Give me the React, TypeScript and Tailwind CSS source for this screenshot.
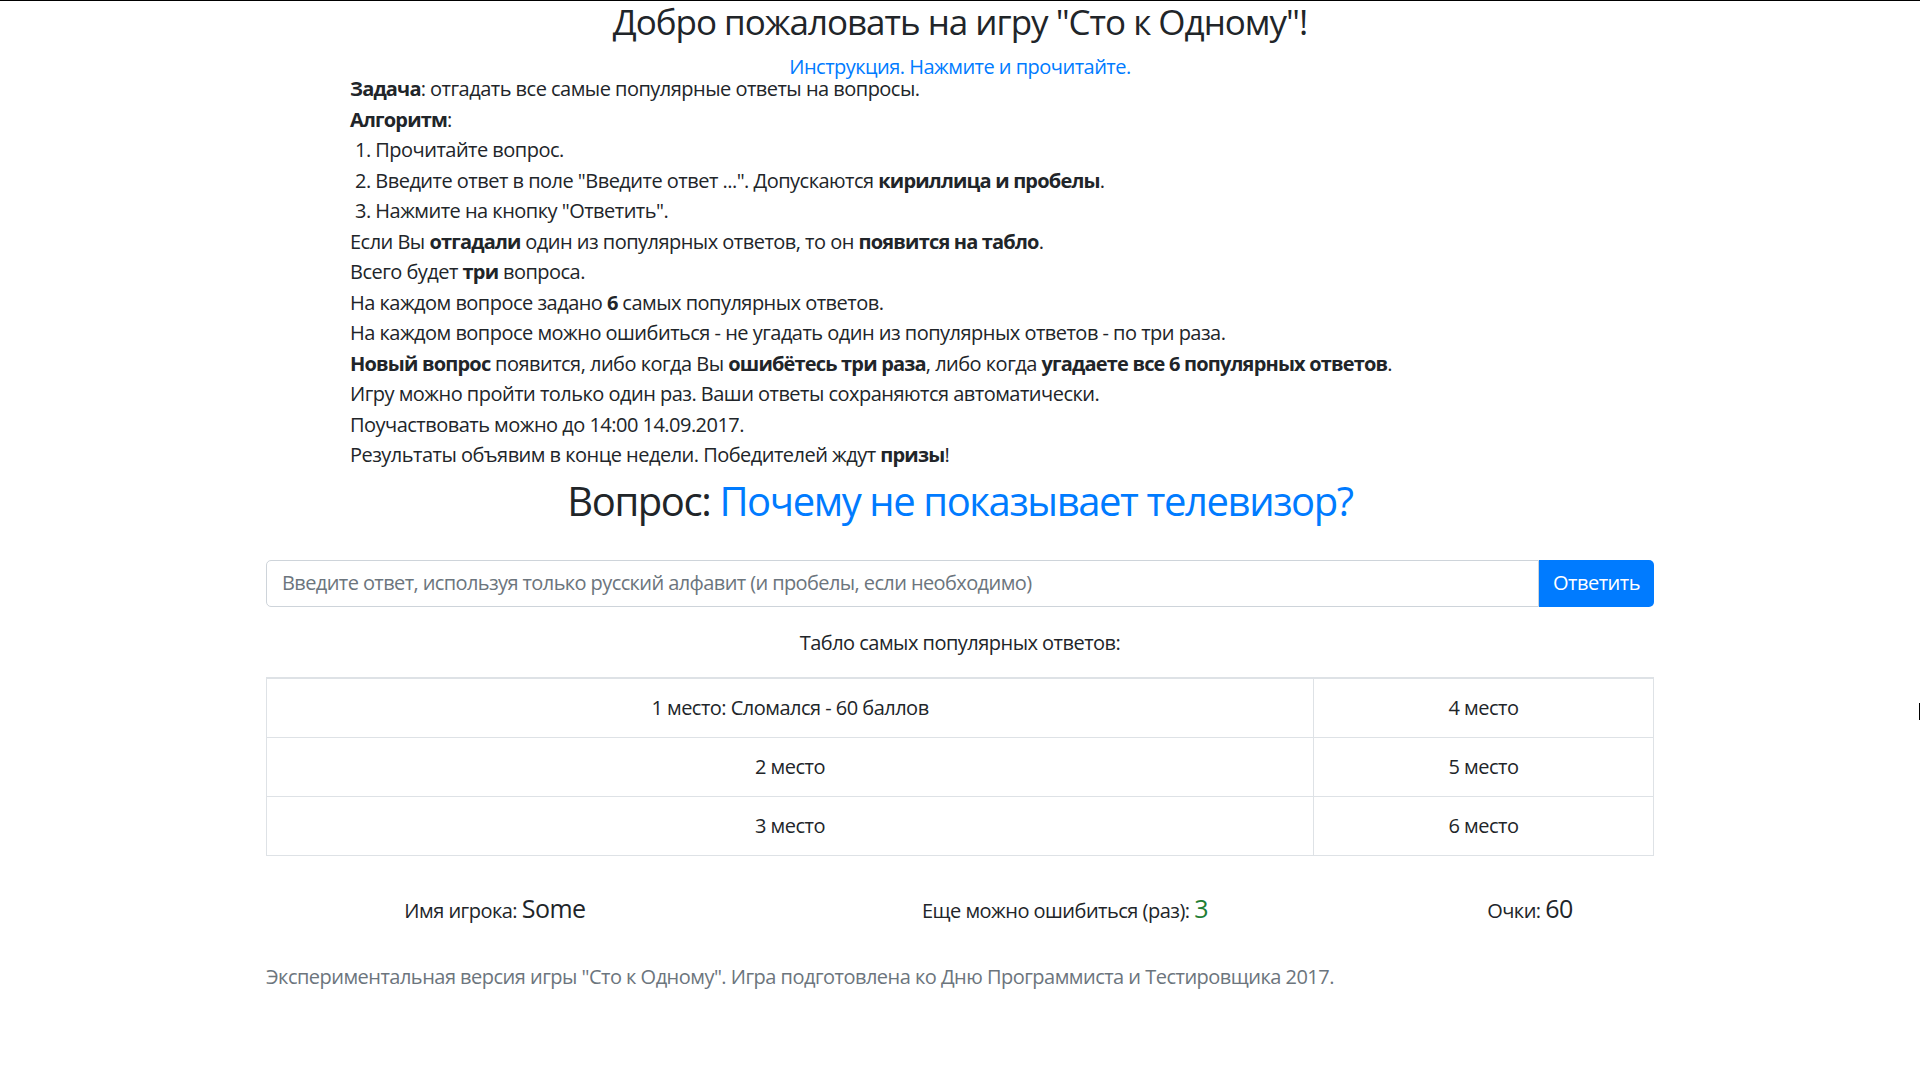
import React from "react";

const font = "font-['Segoe_UI','Open_Sans',sans-serif] tracking-[-0.026em]";

const rules: React.ReactNode[] = [
  <>
    <b>Задача</b>: отгадать все самые популярные ответы на вопросы.
  </>,
  <>
    <b>Алгоритм</b>:
  </>,
  <span className="pl-[5px]">1. Прочитайте вопрос.</span>,
  <span className="pl-[5px]">
    2. Введите ответ в поле "Введите ответ ...". Допускаются <b>кириллица и пробелы</b>.
  </span>,
  <span className="pl-[5px]">3. Нажмите на кнопку "Ответить".</span>,
  <>
    Если Вы <b>отгадали</b> один из популярных ответов, то он <b>появится на табло</b>.
  </>,
  <>
    Всего будет <b>три</b> вопроса.
  </>,
  <>
    На каждом вопросе задано <b>6</b> самых популярных ответов.
  </>,
  <>На каждом вопросе можно ошибиться - не угадать один из популярных ответов - по три раза.</>,
  <>
    <b>Новый вопрос</b> появится, либо когда Вы <b>ошибётесь три раза</b>, либо когда{" "}
    <b>угадаете все 6 популярных ответов</b>.
  </>,
  <>Игру можно пройти только один раз. Ваши ответы сохраняются автоматически.</>,
  <>Поучаствовать можно до 14:00 14.09.2017.</>,
  <>
    Результаты объявим в конце недели. Победителей ждут <b>призы</b>!
  </>,
];

const board = [
  ["1 место: Сломался - 60 баллов", "4 место"],
  ["2 место", "5 место"],
  ["3 место", "6 место"],
];

export default function App() {
  return (
    <div className={`${font} relative min-h-[1080px] bg-white text-[#212529] text-[20px] leading-[30px] border-t-[1px] border-black`}>
      <div className="absolute right-0 top-[702px] h-[17px] w-[1px] bg-black" />

      <div className="mx-auto w-[1388px]">
        <h3 className="text-center text-[35px] leading-[42px] font-normal tracking-[-0.029em]">
          Добро пожаловать на игру "Сто к Одному"!
        </h3>

        <div className="mt-[9px] h-[22px] text-center">
          <a href="#" className="text-[#007bff]">
            Инструкция. Нажмите и прочитайте.
          </a>
        </div>

        <div className="pl-[84px] [&_b]:font-bold [&_b]:tracking-[-0.041em]">
          {rules.map((r, i) => (
            <div key={i} className="leading-[30.5px]">
              {r}
            </div>
          ))}
        </div>

        <h2 className="mt-[6px] text-center text-[40px] leading-[48px] font-normal tracking-[-0.035em]">
          Вопрос: <span className="text-[#007bff]">Почему не показывает телевизор?</span>
        </h2>

        <div className="mt-[35px] flex h-[47px]">
          <input
            className="min-w-0 flex-1 rounded-l-[5px] border border-[#ced4da] px-[15px] text-[20px] tracking-[-0.03em] outline-none placeholder:text-[#6c757d]"
            placeholder="Введите ответ, используя только русский алфавит (и пробелы, если необходимо)"
          />
          <button className="w-[115px] rounded-r-[5px] bg-[#007bff] text-[20px] text-white">
            Ответить
          </button>
        </div>

        <p className="mt-[21px] text-center">Табло самых популярных ответов:</p>

        <table className="mt-[19px] w-full table-fixed border-collapse border-t-2 border-[#dee2e6]">
          <tbody>
            {board.map(([a, b], i) => (
              <tr key={i} className={i === 0 ? "h-[60px]" : "h-[59px]"}>
                <td className="w-[1047px] border border-[#dee2e6] text-center align-middle">{a}</td>
                <td className="border border-[#dee2e6] text-center align-middle">{b}</td>
              </tr>
            ))}
          </tbody>
        </table>

        <div className="mt-[37px] grid grid-cols-[458px_682px_248px] items-baseline text-center">
          <div>
            Имя игрока: <span className="text-[25px]">Some</span>
          </div>
          <div>
            Еще можно ошибиться (раз): <span className="text-[25px] text-[#1e7e34]">3</span>
          </div>
          <div>
            Очки: <span className="text-[25px]">60</span>
          </div>
        </div>

        <p className="mt-[36px] text-[#6c757d]">
          Экспериментальная версия игры "Сто к Одному". Игра подготовлена ко Дню Программиста и Тестировщика 2017.
        </p>
      </div>
    </div>
  );
}
